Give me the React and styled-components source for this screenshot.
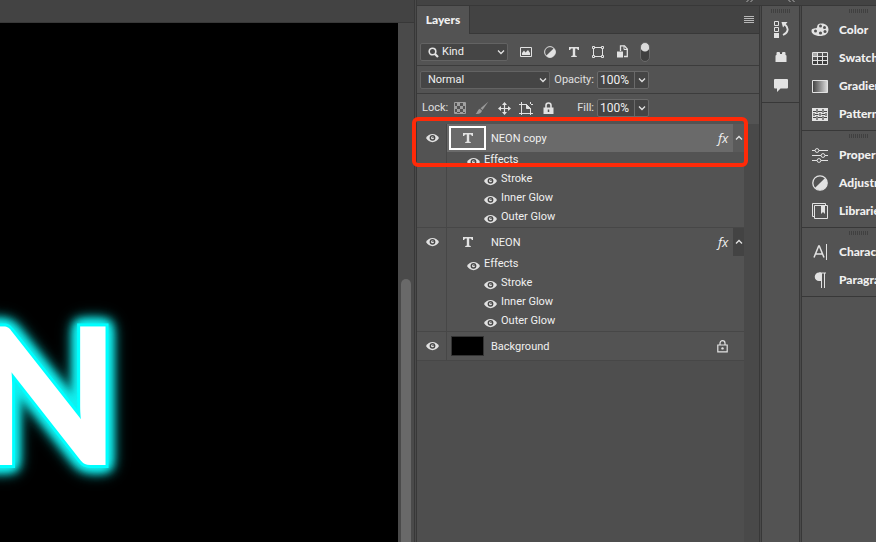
import React from 'react'
import styled, { createGlobalStyle } from 'styled-components'

const GlobalStyle = createGlobalStyle`
    * {
        box-sizing: border-box;
    }

    body {
        margin: 0;
        background-color: #535353;
        color: #f0f0f0;
        font-family: Roboto, "Liberation Sans", sans-serif;
        font-size: 11px;
        line-height: 16px;
    }

    button, input, select {
        margin: 0;
        padding: 0;
        border: 0;
        background: none;
        color: inherit;
        font: inherit;
    }

    svg {
        display: block;
        flex: none;
    }
`

const Window = styled.div`
    display: flex;
    height: 100vh;
    overflow: hidden;
`

const Document = styled.main`
    flex: 1;
    min-width: 0;
    display: flex;
    flex-direction: column;
`

const DocumentBar = styled.div`
    height: 23px;
    background-color: #434343;
    border-bottom: 1px solid #383838;
`

const DocumentBody = styled.div`
    flex: 1;
    display: flex;
    min-height: 0;
`

const Canvas = styled.div`
    position: relative;
    flex: 1;
    overflow: hidden;
    background-color: #000000;
`

const NeonText = styled.span`
    position: absolute;
    top: 258px;
    right: 278px;
    color: white;
    font-family: Lato, sans-serif;
    font-weight: 900;
    font-size: 191px;
    line-height: 220px;
    -webkit-text-stroke: 6px #00ffff;
    paint-order: stroke fill;
    filter: drop-shadow(0 0 5px #11f0f0) drop-shadow(0 0 6px #11f0f0) drop-shadow(0 0 5px #11f0f0);
`

const ScrollTrack = styled.div`
    display: flex;
    width: 16px;
    padding: 256px 3px 0;
    background-color: #4a4a4a;
`

const ScrollThumb = styled.div`
    flex: 1;
    border-radius: 5px 5px 0 0;
    background-color: #696969;
`

const Gutter = styled.div`
    flex: none;
    width: 3px;
    border: solid #383838;
    border-width: 0 1px;
    background-color: #4a4a4a;
`

const Dock = styled.div`
    flex: none;
    display: flex;
    flex-direction: column;
`

const DockBar = styled.div`
    display: flex;
    height: 6px;
    padding-left: 329px;
    gap: 33px;
    overflow: hidden;
    background-color: #434343;
    border-bottom: 1px solid #383838;
`

const DockColumns = styled.div`
    flex: 1;
    display: flex;
    min-height: 0;
`

const Panel = styled.section`
    width: 342px;
    display: flex;
    flex-direction: column;
`

const TabBar = styled.div`
    display: flex;
    justify-content: space-between;
    height: 28px;
    background-color: #434343;
`

const Tab = styled.button`
    width: 53px;
    border-right: 1px solid #383838;
    background-color: #535353;
    font-family: Lato, sans-serif;
    font-size: 12px;
    font-weight: 900;
`

const TabSpacer = styled.div`
    flex: 1;
    border-bottom: 1px solid #383838;
`

const MenuButton = styled.button`
    display: flex;
    align-items: center;
    padding-right: 5px;
    border-bottom: 1px solid #383838;
`

const FilterRow = styled.div`
    display: flex;
    align-items: center;
    height: 32px;
    padding: 4px 3px 0;
    border-bottom: 1px solid #3c3c3c;
`

const OptionRow = styled.div`
    display: grid;
    grid-template-columns: 134px 43px 52px;
    align-items: center;
    height: ${props => props.$last ? '30px' : '28px'};
    padding: 0 3px ${props => props.$last ? '2px' : '0'};
    border-bottom: ${props => props.$last ? '0' : '1px solid #3c3c3c'};
`

const SelectBox = styled.span`
    position: relative;
    width: ${props => props.$width};
    height: 18px;

    > svg {
        position: absolute;
        top: 6px;
        right: 3px;
        pointer-events: none;
    }

    > svg:first-child {
        top: 4px;
        left: 8px;
    }
`

const Select = styled.select`
    appearance: none;
    width: 100%;
    height: 18px;
    padding-left: ${props => props.$indent};
    border: 1px solid #636363;
    border-radius: 2px;
    background-color: #454545;
`

const FilterIcons = styled.div`
    display: flex;
    gap: 8px;
    margin-left: 10px;
`

const IconButton = styled.button`
    flex: none;
    display: flex;
    align-items: center;
    justify-content: center;
    width: 16px;
    height: 18px;
`

const Toggle = styled.label`
    display: flex;
    margin-left: 10px;
`

const ToggleInput = styled.input`
    appearance: none;
    width: 10px;
    height: 20px;
    border: 1px solid #6a6a6a;
    border-radius: 5px;
    background: radial-gradient(circle at 4px 4px, #dcdcdc 4px, #404040 5px);
`

const FieldLabel = styled.label`
    padding-right: 3px;
    text-align: right;
    color: #e0e0e0;
`

const Field = styled.div`
    display: flex;
    height: 18px;
    border: 1px solid #6a6a6a;
    border-radius: 2px;
    background-color: #454545;
`

const FieldInput = styled.input`
    width: 36px;
    padding-left: 2px;
    font-size: 12px;
`

const FieldButton = styled.button`
    flex: 1;
    display: flex;
    align-items: center;
    justify-content: center;
    border-left: 1px solid #6a6a6a;
`

const LockTools = styled.div`
    display: flex;
    align-items: center;
    gap: 6px;
    padding-left: 2px;
    color: #e0e0e0;
`

const LockLabel = styled.span`
    flex: none;
    width: 24px;
`

const ListArea = styled.div`
    flex: 1;
    border-right: 15px solid #494949;
    background-color: #4e4e4e;
`

const LayerItem = styled.div`
    position: relative;
    display: flex;
    border-bottom: 1px solid #474747;
    background-color: #535353;
`

const EyeColumn = styled.div`
    width: 30px;
    border-right: 1px solid #474747;
`

const EyeButton = styled.button`
    display: flex;
    align-items: center;
    justify-content: center;
    width: ${props => props.$wide ? '31px' : '13px'};
    height: ${props => props.$wide ? '28px' : '19px'};
`

const LayerMain = styled.div`
    flex: 1;
`

const LayerHead = styled.div`
    display: flex;
    align-items: center;
    height: 28px;
    padding-left: 2px;
    background-color: ${props => props.$selected ? '#6a6a6a' : 'transparent'};
`

const Thumb = styled.div`
    display: flex;
    align-items: center;
    justify-content: center;
    width: 37px;
    height: 24px;
    border: 2px solid ${props => props.$selected ? 'white' : 'transparent'};
`

const FillThumb = styled.div`
    width: 33px;
    height: 20px;
    margin: 0 2px;
    border: 1px solid #333333;
    background-color: #000000;
`

const LayerName = styled.span`
    flex: 1;
    padding: 2px 0 0 5px;
`

const Fx = styled.span`
    width: 15px;
    font-family: "Open Sans", sans-serif;
    font-style: italic;
    font-size: 13px;
`

const Fold = styled.button`
    display: flex;
    align-items: center;
    justify-content: center;
    width: 11px;
    height: 100%;
    background-color: ${props => props.$selected ? '#5a5a5a' : '#434343'};
`

const LockSlot = styled.span`
    padding-right: 16px;
`

const EffectRow = styled.div`
    display: flex;
    gap: 4px;
    height: ${props => props.$last ? '18px' : '19px'};
    padding-left: ${props => props.$nested ? '37px' : '20px'};
    line-height: 15px;
`

const Highlight = styled.div`
    position: absolute;
    z-index: 1;
    top: -7px;
    left: -5px;
    right: -4px;
    height: 50px;
    border: 4px solid #ff2a08;
    border-radius: 6px;
    pointer-events: none;
`

const IconStrip = styled.nav`
    width: 37px;
`

const PanelList = styled.nav`
    width: 74px;
    overflow: hidden;
`

const Group = styled.div`
    padding-bottom: 2px;
    border-bottom: 1px solid #383838;
`

const Grip = styled.div`
    width: 20px;
    height: 10px;
    margin-left: ${props => props.$left};
    border: solid #535353;
    border-width: 3px 0;
    background: repeating-linear-gradient(90deg, #404040 0 1px, #535353 1px 2px);
`

const StripButton = styled.button`
    display: flex;
    align-items: center;
    justify-content: center;
    width: 100%;
    height: 28px;
    padding-bottom: 2px;
`

const PanelButton = styled.button`
    display: grid;
    grid-template-columns: 18px auto;
    justify-items: center;
    align-items: center;
    gap: 10px;
    height: 28px;
    padding-left: 9px;
    font-family: Lato, sans-serif;
    font-size: 12px;
    font-weight: 900;
    white-space: nowrap;
`

const Svg = ({w = 16, h = 16, children}) => (
    <svg width={w} height={h} viewBox={`0 0 ${w} ${h}`} fill='none' stroke='#e2e2e2' aria-hidden='true'>
        {children}
    </svg>
)

const Solid = ({w, h, children}) => (
    <Svg w={w} h={h}><g fill='#e2e2e2' stroke='none'>{children}</g></Svg>
)

const Chevron = ({up}) => (
    <Svg w={8} h={6}><path d={up ? 'M1 4.500 4 1.500 7 4.500' : 'M1 1.500 4 4.500 7 1.500'} strokeWidth='1.300' /></Svg>
)

const Eye = () => (
    <Svg w={13} h={10}>
        <path d='M0 5C3-.5 10-.5 13 5 10 10.500 3 10.500 0 5Z' fill='#e2e2e2' stroke='none' />
        <circle cx='6.500' cy='4.800' r='2.900' fill='#474747' stroke='none' />
        <circle cx='6.500' cy='4.800' r='1.500' fill='#e2e2e2' stroke='none' />
        <circle cx='7' cy='4.300' r='.8' fill='#474747' stroke='none' />
    </Svg>
)

const Search = () => (
    <Svg w={11} h={11}><circle cx='4.500' cy='4.500' r='3.300' strokeWidth='1.600' /><path d='m7 7 3 3' strokeWidth='2.200' /></Svg>
)

const TypeIcon = () => (
    <Solid w={12} h={12}><path d='M1 1H11V4H9.800Q9.600 2.500 8.500 2.500H7.200V9.300Q7.200 10 8.800 10V11H3.200V10Q4.800 10 4.800 9.300V2.500H3.500Q2.400 2.500 2.200 4H1Z' /></Solid>
)

const ImageIcon = () => (
    <Svg w={12} h={10}><path d='M.5.5H11.500V9.500H.5Z' /><path d='M2 8V6L4 3.500 5.500 5.500 8 3 10 6V8Z' fill='#e2e2e2' stroke='none' /></Svg>
)

const AdjustIcon = ({size}) => (
    <svg width={size} height={size} viewBox='0 0 16 16' fill='none' aria-hidden='true'>
        <circle cx='8' cy='8' r='7.200' stroke='#e2e2e2' strokeWidth='1.300' />
        <path d='M13.100 2.900A7.200 7.200 0 0 1 2.900 13.100Z' fill='#e2e2e2' />
    </svg>
)

const ShapeIcon = () => (
    <Svg w={12} h={12}>
        <path d='M3 1.500H9M3 10.500H9M1.500 3V9M10.500 3V9' />
        <path d='M.5.5H2.500V2.500H.5ZM9.500.5H11.500V2.500H9.500ZM.5 9.500H2.500V11.500H.5ZM9.500 9.500H11.500V11.500H9.500Z' />
    </Svg>
)

const SmartIcon = () => (
    <Svg w={12} h={13}>
        <path d='M4.500 6V.8H8.500L11.300 4V11.500H8' strokeWidth='1.300' />
        <path d='M8 .8V4.500H11.500' />
        <path d='M1 6.500H7V12.500H1Z' fill='#e2e2e2' stroke='none' />
    </Svg>
)

const CheckerIcon = () => (
    <Svg w={12} h={12}>
        <path d='M.5.5H11.500V11.500H.5Z' stroke='#a0a0a0' />
        <path d='M3 1H6V4H3ZM9 1H11V4H9ZM1 4H3V7H1ZM6 4H9V7H6ZM3 7H6V10H3ZM9 7H11V10H9ZM1 10H3V11H1ZM6 10H9V11H6Z' fill='#a0a0a0' stroke='none' />
    </Svg>
)

const BrushIcon = () => (
    <Svg w={14} h={14}>
        <g fill='#9a9a9a' stroke='none'>
            <path d='M13.500.5 7.500 9 5.500 7.200Z' />
            <path d='M4.800 7.800 7 9.800C6.500 12 4.500 13.500.5 13 2.500 12 2.500 8.500 4.800 7.800Z' />
        </g>
    </Svg>
)

const MoveIcon = () => (
    <Svg w={13} h={13}>
        <path d='M6.500 2V11M2 6.500H11' strokeWidth='1.200' />
        <path d='M6.500 0 9 3H4ZM6.500 13 4 10H9ZM0 6.500 3 4V9ZM13 6.500 10 9V4Z' fill='#e2e2e2' stroke='none' />
    </Svg>
)

const ArtboardIcon = () => (
    <Svg w={14} h={13}>
        <path d='M2.500 0V13M0 2.500H8M0 11.500H14M11.500 6V13M12 2.500H14M11.500 0V2' />
        <path d='M7.500 2.500 11.500 6.500H7.500Z' fill='#e2e2e2' />
    </Svg>
)

const SolidLock = () => (
    <Svg w={11} h={13}>
        <path d='M3 6V3.500A2.500 2.500 0 0 1 8 3.500V6' strokeWidth='1.600' />
        <path d='M.5 5.500H10.500V12H.5Z' fill='#e2e2e2' stroke='none' />
        <path d='M5.500 7.500V10' stroke='#535353' strokeWidth='1.500' />
    </Svg>
)

const OutlineLock = () => (
    <Svg w={11} h={13}>
        <path d='M3 5V3.200A2.500 2.500 0 0 1 8 3.200V5M.8 5H10.200V11.800H.8Z' strokeWidth='1.200' />
        <circle cx='5.500' cy='8.400' r='1.200' fill='#e2e2e2' stroke='none' />
    </Svg>
)

const MenuIcon = () => (
    <Svg w={10} h={8}><path d='M0 .5H10M0 2.500H10M0 4.500H10M0 6.500H10' stroke='#b8b8b8' /></Svg>
)

const HistoryIcon = () => (
    <Svg w={16} h={18}>
        <path d='M1.500 1.500H5.500V5.500H1.500ZM1.500 7.500H5.500V11.500H1.500Z' />
        <path d='M1 13H6V18H1Z' fill='#e2e2e2' stroke='none' />
        <path d='M10 15C15.500 12.500 16 8 12 4.500' strokeWidth='1.900' />
        <path d='M8.500 2H14.500L10 7.500Z' fill='#e2e2e2' stroke='none' />
    </Svg>
)

const BrickIcon = () => (
    <Solid w={12} h={10}><path d='M1.500 3V1Q1.500 0 2.500 0H4Q5 0 5 1V2H7V1Q7 0 8 0H9.500Q10.500 0 10.500 1V3Q11.500 3 11.500 4V10H.5V4Q.5 3 1.500 3Z' /></Solid>
)

const CommentIcon = () => (
    <Solid w={14} h={13}><path d='M1 0H13Q14 0 14 1V8.500Q14 9.500 13 9.500H6.500L3 13V9.500H1Q0 9.500 0 8.500V1Q0 0 1 0Z' /></Solid>
)

const PaletteIcon = () => (
    <Svg w={18} h={14}>
        <path d='M9.500 .5C14 0 17.500 2.500 17.500 6.500 17.500 11 13.500 13 9 13 4 13 0 10.500.5 7.500 1 4.500 5 6 6 4.500 6.500 3 6 1 9.500.5Z' fill='#e2e2e2' stroke='none' />
        <g fill='#535353' stroke='none'>
            <circle cx='9.500' cy='3' r='1.500' />
            <circle cx='13.500' cy='4.500' r='1.500' />
            <circle cx='14' cy='8.500' r='1.500' />
            <circle cx='9.500' cy='10' r='1.600' />
            <circle cx='4.500' cy='8' r='1.500' />
        </g>
    </Svg>
)

const SwatchesIcon = () => (
    <Svg w={16} h={13}>
        <path d='M1 1H5V4H1Z' fill='#aaaaaa' stroke='none' />
        <path d='M6 5H10V8H6ZM11 5H15V8H11ZM1 9H5V12H1ZM6 9H10V12H6ZM11 9H15V12H11Z' fill='#3c3c3c' stroke='none' />
        <path d='M.5.5H15.500V12.500H.5ZM5.500 0V13M10.500 0V13M0 4.500H16M0 8.500H16' />
    </Svg>
)

const GradientIcon = () => (
    <Svg w={16} h={13}>
        <defs>
            <linearGradient id='ramp'>
                <stop offset='0' stopColor='#404040' />
                <stop offset='1' stopColor='#dddddd' />
            </linearGradient>
        </defs>
        <path d='M.5.5H15.500V12.500H.5Z' fill='url(#ramp)' />
    </Svg>
)

const PatternIcon = () => (
    <Svg w={16} h={13}>
        <path d='M0 0H16V13H0Z' fill='#e2e2e2' stroke='none' />
        <path d='M1 3.500H4M6 3.500H10M12 3.500H15M3 6.500H6.500M9.500 6.500H13M1 9.500H4M6 9.500H10M12 9.500H15M5 1V5M11 1V5M8 5V8M5 8V12M11 8V12M2 5V8M14 5V8' stroke='#484848' strokeWidth='1.200' />
    </Svg>
)

const SlidersIcon = () => (
    <Svg w={16} h={15}>
        <path d='M0 2.500H3M7 2.500H16M0 7.500H9M13 7.500H16M0 12.500H5M9 12.500H16' strokeWidth='1.200' />
        <circle cx='5' cy='2.500' r='1.900' />
        <circle cx='11' cy='7.500' r='1.900' />
        <circle cx='7' cy='12.500' r='1.900' />
    </Svg>
)

const LibraryIcon = () => (
    <Svg w={16} h={16}>
        <path d='M2.500 2.500H15.500V15.500H2.500ZM13.500 2.500V.5H.5V13.500H2.500' />
        <path d='M9 3H13V11L11 9 9 11Z' fill='#e2e2e2' stroke='none' />
    </Svg>
)

const CharacterIcon = () => (
    <Svg w={16} h={18}>
        <path d='M2 14.500 6.700 3H7.300L12 14.500M3.800 11H10.200' strokeWidth='1.500' />
        <path d='M14.500 1V17' />
    </Svg>
)

const ParagraphIcon = () => (
    <Svg w={16} h={16}>
        <path d='M13.500 .5H7A4.200 4.200 0 0 0 7 9H9V.5' fill='#e2e2e2' stroke='none' />
        <path d='M7 1H14M9.500 1V16M12.500 1V16' />
    </Svg>
)

const Arrows = ({left}) => (
    <Svg w={8} h={4}>
        <g transform='translate(0 -5)'>
            <path d={left ? 'M3.500 2 1 4.500 3.500 7M7.500 2 5 4.500 7.500 7' : 'M.5 2 3 4.500.5 7M4.500 2 7 4.500 4.500 7'} stroke='#b0b0b0' />
        </g>
    </Svg>
)

const filters = [
    ['Pixel layers', <ImageIcon />],
    ['Adjustment layers', <AdjustIcon size={12} />],
    ['Type layers', <TypeIcon />],
    ['Shape layers', <ShapeIcon />],
    ['Smart objects', <SmartIcon />]
]

const locks = [
    ['Lock transparent pixels', <CheckerIcon />],
    ['Lock image pixels', <BrushIcon />],
    ['Lock position', <MoveIcon />],
    ['Prevent auto-nesting', <ArtboardIcon />],
    ['Lock all', <SolidLock />]
]

const panelGroups = [
    [
        ['Color', <PaletteIcon />],
        ['Swatches', <SwatchesIcon />],
        ['Gradients', <GradientIcon />],
        ['Patterns', <PatternIcon />]
    ],
    [
        ['Properties', <SlidersIcon />],
        ['Adjustments', <AdjustIcon size={16} />],
        ['Libraries', <LibraryIcon />]
    ],
    [
        ['Character', <CharacterIcon />],
        ['Paragraph', <ParagraphIcon />]
    ]
]

const effects = ['Effects', 'Stroke', 'Inner Glow', 'Outer Glow']

const PercentField = ({id, label}) => (
    <>
        <FieldLabel htmlFor={id}>{label}</FieldLabel>
        <Field>
            <FieldInput id={id} defaultValue='100%' />
            <FieldButton aria-label={`${label} slider`}><Chevron /></FieldButton>
        </Field>
    </>
)

const TextLayer = ({name, selected}) => (
    <LayerItem>
        <EyeColumn>
            <EyeButton $wide aria-label={`Toggle ${name}`}><Eye /></EyeButton>
        </EyeColumn>
        <LayerMain>
            <LayerHead $selected={selected}>
                <Thumb $selected={selected}><TypeIcon /></Thumb>
                <LayerName>{name}</LayerName>
                <Fx>fx</Fx>
                <Fold $selected={selected} aria-label='Collapse effects'><Chevron up /></Fold>
            </LayerHead>
            {effects.map((effect, i) => (
                <EffectRow key={effect} $nested={i > 0} $last={i === effects.length - 1}>
                    <EyeButton aria-label={`Toggle ${effect}`}><Eye /></EyeButton>
                    <span>{effect}</span>
                </EffectRow>
            ))}
        </LayerMain>
        {selected && <Highlight />}
    </LayerItem>
)

const LayersPanel = () => (
    <Panel>
        <TabBar>
            <Tab>Layers</Tab>
            <TabSpacer />
            <MenuButton aria-label='Panel menu'><MenuIcon /></MenuButton>
        </TabBar>
        <FilterRow>
            <SelectBox $width='88px'>
                <Search />
                <Select $indent='21px' aria-label='Filter type'><option>Kind</option></Select>
                <Chevron />
            </SelectBox>
            <FilterIcons>
                {filters.map(([label, icon]) => <IconButton key={label} aria-label={label}>{icon}</IconButton>)}
            </FilterIcons>
            <Toggle><ToggleInput type='checkbox' aria-label='Layer filtering' /></Toggle>
        </FilterRow>
        <OptionRow>
            <SelectBox $width='130px'>
                <Select $indent='7px' aria-label='Blend mode'><option>Normal</option></Select>
                <Chevron />
            </SelectBox>
            <PercentField id='opacity' label='Opacity:' />
        </OptionRow>
        <OptionRow $last>
            <LockTools>
                <LockLabel>Lock:</LockLabel>
                {locks.map(([label, icon]) => <IconButton key={label} aria-label={label}>{icon}</IconButton>)}
            </LockTools>
            <PercentField id='fill' label='Fill:' />
        </OptionRow>
        <ListArea>
            <TextLayer name='NEON copy' selected />
            <TextLayer name='NEON' />
            <LayerItem>
                <EyeColumn>
                    <EyeButton $wide aria-label='Toggle Background'><Eye /></EyeButton>
                </EyeColumn>
                <LayerMain>
                    <LayerHead>
                        <FillThumb />
                        <LayerName>Background</LayerName>
                        <LockSlot><OutlineLock /></LockSlot>
                    </LayerHead>
                </LayerMain>
            </LayerItem>
        </ListArea>
    </Panel>
)

const App = () => (
    <>
        <GlobalStyle />
        <Window>
            <Document>
                <DocumentBar />
                <DocumentBody>
                    <Canvas><NeonText>NEON</NeonText></Canvas>
                    <ScrollTrack><ScrollThumb /></ScrollTrack>
                </DocumentBody>
            </Document>
            <Gutter />
            <Dock>
                <DockBar>
                    <Arrows />
                    <Arrows left />
                </DockBar>
                <DockColumns>
                    <LayersPanel />
                    <Gutter />
                    <IconStrip>
                        <Group>
                            <Grip $left='9px' />
                            <StripButton aria-label='History'><HistoryIcon /></StripButton>
                            <StripButton aria-label='Plugins'><BrickIcon /></StripButton>
                            <StripButton aria-label='Comments'><CommentIcon /></StripButton>
                        </Group>
                    </IconStrip>
                    <Gutter />
                    <PanelList>
                        {panelGroups.map((group, i) => (
                            <Group key={i}>
                                <Grip $left='47px' />
                                {group.map(([label, icon]) => (
                                    <PanelButton key={label}>{icon}{label}</PanelButton>
                                ))}
                            </Group>
                        ))}
                    </PanelList>
                </DockColumns>
            </Dock>
        </Window>
    </>
)

export default App
